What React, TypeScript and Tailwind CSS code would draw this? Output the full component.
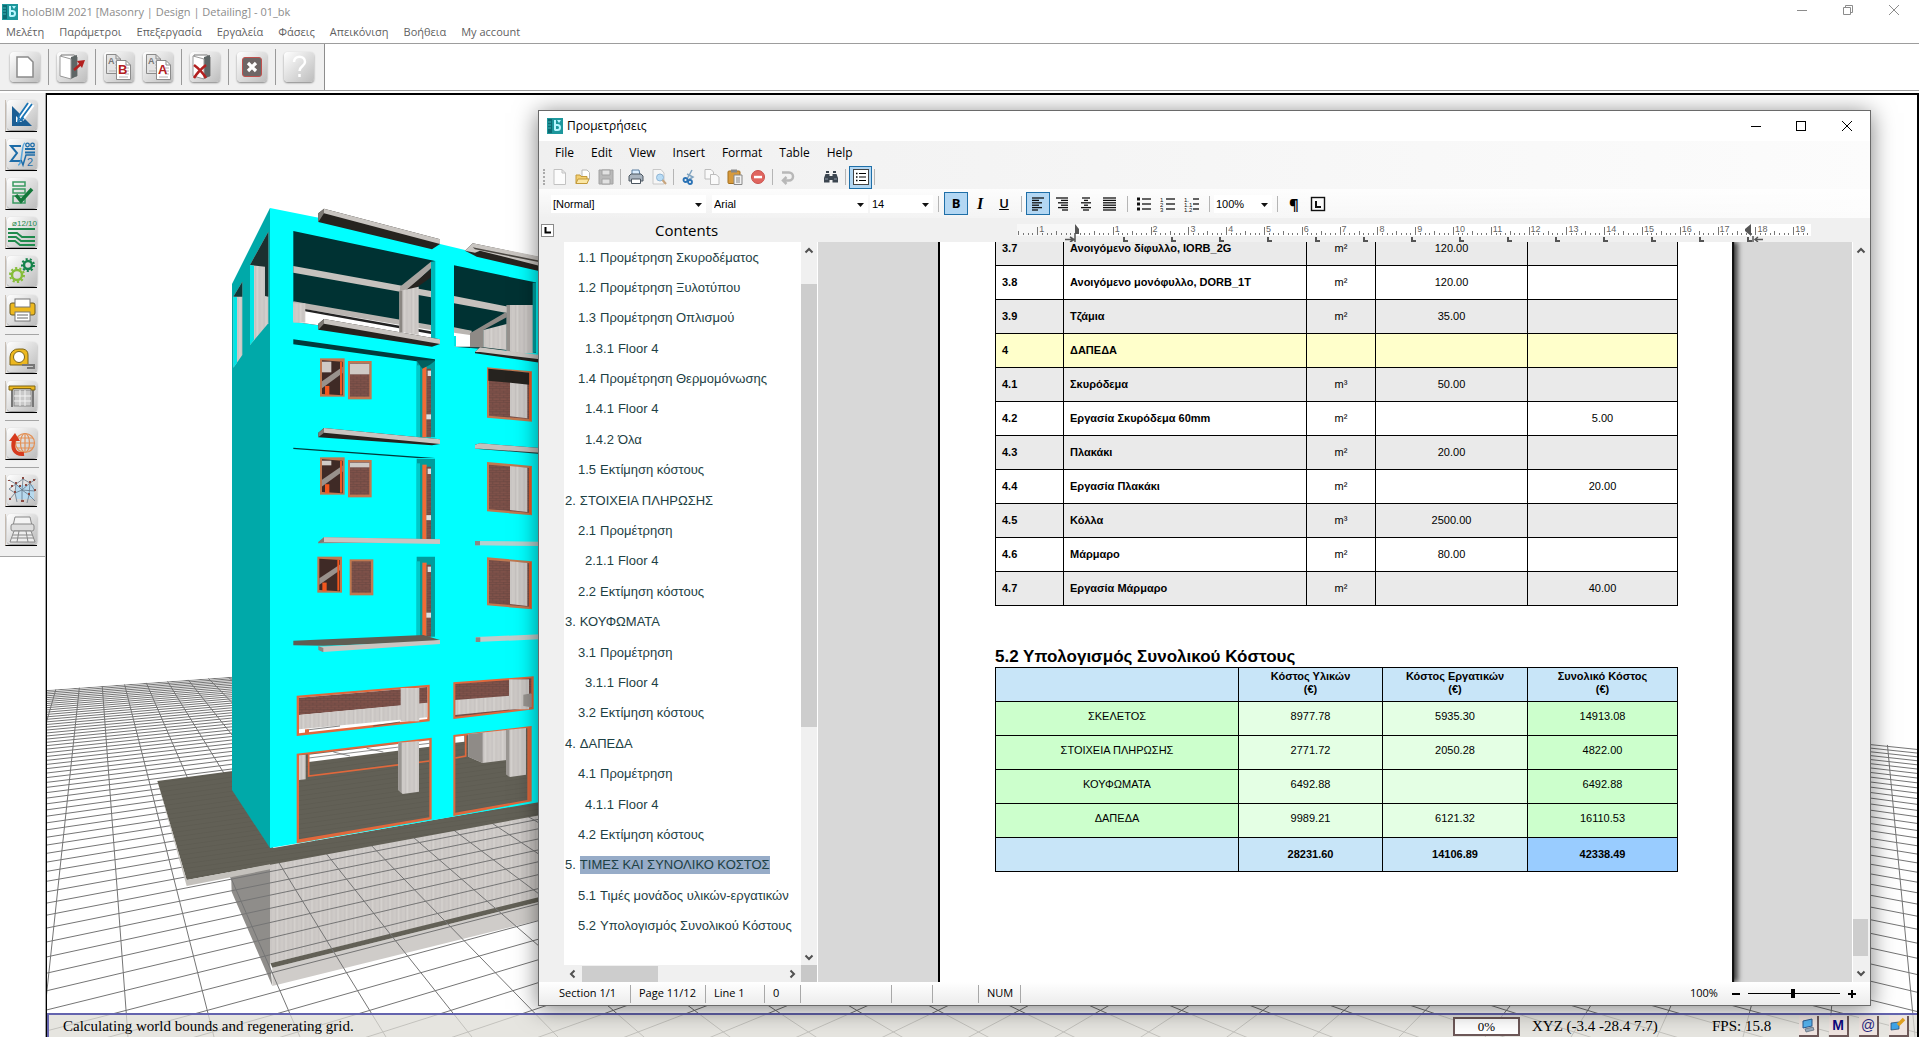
import React from "react";

const UI = "font-['Open_Sans','Noto_Sans',sans-serif]";
const DOC = "font-['Liberation_Sans',Arial,sans-serif]";

/* ---------- 3D scene ---------- */

const VP_A = { x: 1870, y: 560 };
const VP_B = { x: 93, y: 560 };
const range = (a: number, b: number) => Array.from({ length: b - a + 1 }, (_, i) => a + i);

function ray(vp: { x: number; y: number }, x0: number) {
  const f = 6;
  return { x1: vp.x, y1: vp.y, x2: vp.x + (x0 - vp.x) * f, y2: vp.y + 477 * f };
}

function Pair({ y, h, brickTop = 0, left = 0, right = 0 }: { y: number; h: number; brickTop?: number; left?: number; right?: number }) {
  return (
    <g>
      <g transform={`translate(${left} 0)`}>
        <rect x="510" y={y} width="74" height={h} fill="#c07850" />
        <polygon points={`516,${y + 6} 578,${y + 10} 578,${y + h - 4} 516,${y + h - 8}`} fill="#3f2a26" />
        <rect x="516" y={y + 10} width="28" height={brickTop} fill="#cfcac6" />
        <polygon points={`516,${y + h * 0.6} 578,${y + h * 0.22} 578,${y + h * 0.38} 516,${y + h * 0.78}`} fill="#99918c" />
        <rect x="525" y={y + h * 0.72} width="13" height={h * 0.24} fill="#f2571f" />
        <rect x="570" y={y + 10} width="6" height={h - 16} fill="#f2571f" />
      </g>
      <g transform={`translate(${right} 0)`}>
        <rect x="594" y={y + 8} width="71" height={h} fill="#c07850" />
        <rect x="600" y={y + 14} width="58" height={h - 14} fill="url(#brick)" />
        <rect x="600" y={y + 16} width="58" height={brickTop} fill="#cfcac6" />
      </g>
    </g>
  );
}

function Door({ y, h }: { y: number; h: number }) {
  return (
    <g>
      <polygon points={`800,${y} 855,${y} 855,${y + h} 800,${y + h}`} fill="#009c9c" />
      <rect x="800" y={y + 14} width="10" height={h - 14} fill="#00c8c8" />
      <rect x="817" y={y + 18} width="13" height={h - 18} fill="#f26a35" />
      <rect x="830" y={y + 24} width="13" height={h - 24} fill="url(#brick)" />
      <rect x="833" y={y + 30} width="10" height="16" fill="#ddd" />
      <rect x="829" y={y + h * 0.7} width="14" height="15" fill="#ddd" />
    </g>
  );
}

function BigWindow({ y, h, dark }: { y: number; h: number; dark?: boolean }) {
  return (
    <g>
      <polygon points={`1011,${y} 1146,${y + 12} 1146,${y + h + 8} 1011,${y + h - 4}`} fill="#c07850" />
      <polygon points={`1017,${y + 8} 1138,${y + 18} 1138,${y + h} 1017,${y + h - 10}`} fill="url(#brick)" />
      <polygon points={`1080,${y + 12} 1132,${y + 17} 1132,${y + h - 2} 1080,${y + h - 8}`} fill="url(#concrete)" />
      {dark && <polygon points={`1015,${y + 4} 1138,${y + 16} 1138,${y + 52} 1015,${y + 40}`} fill="#26231f" />}
      <rect x="1138" y={y + 14} width="5" height={h - 10} fill="#f2571f" />
    </g>
  );
}

function Ledge({ y, x2 = 870, y2, h, dark }: { y: number; x2?: number; y2: number; h: number; dark?: boolean }) {
  return (
    <g>
      <polygon points={`505,${y + 14} 522,${y} ${x2},${y2} ${x2},${y2 + 14} 846,${y2 + h - 10} 505,${y + h}`} fill={dark ? "#26231f" : "#8f8b86"} />
      <polygon points={`522,${y} ${x2},${y2} ${x2},${y2 + 14} 522,${y + 14}`} fill="#c9c5c1" />
      <polygon points={`505,${y + 14} 522,${y} 522,${y + 14} 505,${y + h}`} fill="#7e7a75" />
    </g>
  );
}

function Scene() {
  return (
    <svg className="absolute inset-0 h-full w-full" viewBox="47 95 1870 942" preserveAspectRatio="xMinYMin slice" aria-label="3D model of a building">
      <defs>
        <clipPath id="ground">
          <polygon points="46,690 820,635 1918,748 1918,1040 46,1040" />
        </clipPath>
        <pattern id="brick" width="22" height="14" patternUnits="userSpaceOnUse">
          <rect width="22" height="14" fill="#80524a" />
          <path d="M0 .5H22M0 7.5H22M5 0V7M16 7V14" stroke="#664640" strokeWidth="2" />
        </pattern>
        <pattern id="concrete" width="26" height="40" patternUnits="userSpaceOnUse">
          <rect width="26" height="40" fill="#cecac7" />
          <path d="M4 0V40M17 0V40" stroke="#c6c2bf" strokeWidth="3" />
          <path d="M10 0V40" stroke="#d5d2cf" strokeWidth="3" />
        </pattern>
        <pattern id="planks" width="60" height="14" patternUnits="userSpaceOnUse" patternTransform="rotate(-8)">
          <rect width="60" height="14" fill="#626056" />
          <path d="M0 4H60" stroke="#5e5c52" strokeWidth="3" />
        </pattern>
      </defs>

      <g transform="translate(40 600) scale(.33333)">
        <polygon points="690,790 1520,640 1520,890 690,1090" fill="url(#concrete)" />
        <polygon points="573,815 690,805 690,1090 697,1158 575,875" fill="#8f8d8a" />
        <polygon points="697,1103 1520,900 1520,955 697,1158" fill="#cfccc9" />
        <polygon points="691,1090 1520,886 1520,900 697,1103" fill="#626056" />
      </g>

      <g clipPath="url(#ground)" stroke="#757575" strokeWidth="1">
        {range(-62, 17).map((j) => (
          <line key={`a${j}`} {...ray(VP_A, 539 + 86 * j)} />
        ))}
        {range(-2, 53).map((k) => (
          <line key={`b${k}`} {...ray(VP_B, 128 + 86 * k)} />
        ))}
      </g>

      <g transform="translate(40 600) scale(.33333)">
        <polygon points="352,543 600,510 700,744 1520,600 1520,642 440,840" fill="url(#planks)" />
        <polygon points="352,543 440,840 690,793 690,808 440,858" fill="#c4c1bc" />
      </g>

      <polygon points="270,208 232,284 232,790 270,848" fill="#00a9a9" />
      <polygon points="270,208 390,232 540,268 540,802 270,848" fill="#00ffff" />

      <g transform="translate(150 190) scale(.33333)">
        <polygon points="355,125 300,225 300,465 355,400" fill="url(#concrete)" />
        <polygon points="355,125 300,225 345,230 345,318 355,320" fill="#1c3030" />
        <polygon points="300,225 312,227 312,450 300,465" fill="#00e5e5" />
        <polygon points="277,275 250,320 250,533 277,495" fill="url(#concrete)" />
        <polygon points="277,275 250,320 277,320" fill="#103838" />
        <polygon points="250,320 261,322 261,518 250,533" fill="#00e5e5" />

        <polygon points="430,123 855,213 855,455 430,395" fill="#003233" />
        <polygon points="430,228 843,303 843,322 430,248" fill="#c6c2be" />
        <polygon points="430,336 843,412 843,452 430,395" fill="#fff" />
        <polygon points="430,334 843,405 843,420 430,352" fill="#b9b5b1" />
        <polygon points="465,357 843,424 843,432 465,364" fill="#222" />
        <rect x="430" y="340" width="36" height="58" fill="url(#concrete)" />
        <polygon points="750,290 843,215 843,235 770,303 750,303" fill="#aaa5a1" />
        <polygon points="765,303 843,237 843,262 790,300" fill="#26231f" />
        <polygon points="748,303 806,290 806,435 748,425" fill="url(#concrete)" />
        <rect x="748" y="302" width="9" height="124" fill="#8b8782" />
        <polygon points="843,215 856,213 856,455 843,450" fill="#00b5b5" />

        <polygon points="912,226 1170,280 1170,490 912,470" fill="#003233" />
        <polygon points="912,318 1075,350 1075,370 912,340" fill="#c6c2be" />
        <polygon points="912,415 960,423 960,470 912,470" fill="#fff" />
        <rect x="912" y="438" width="6" height="32" fill="#00e5e5" />
        <polygon points="912,412 965,422 965,436 912,428" fill="#b9b5b1" />
        <polygon points="960,430 1070,365 1070,382 1000,420 1000,472 960,472" fill="#8f8a86" />
        <polygon points="1000,420 1070,402 1070,480 1000,472" fill="url(#concrete)" />
        <rect x="1070" y="345" width="80" height="145" fill="url(#concrete)" />
        <rect x="1070" y="345" width="10" height="138" fill="#96928e" />
        <rect x="1148" y="278" width="10" height="210" fill="#00a5a5" />
        <rect x="1158" y="270" width="12" height="220" fill="#00ffff" />

        <Ledge y={56} y2={148} h={40} dark />
        <polygon points="945,182 968,160 1170,202 1170,244 980,200" fill="#26231f" />
        <polygon points="945,182 968,160 1170,200 1170,228 990,182 975,188" fill="#c9c5c1" />
        <polygon points="968,172 1170,212 1170,217 975,178" fill="#4a4641" />
        <Ledge y={387} y2={448} h={32} dark />
        <polygon points="975,486 990,472 1170,498 1170,518 975,490" fill="#26231f" />
        <polygon points="990,472 1170,495 1170,508 990,486 975,486" fill="#c9c5c1" />
        <polygon points="430,448 855,508 855,516 800,514 430,463" fill="#003b3c" />
        <polygon points="430,773 855,804 800,804 430,777" fill="#003b3c" />

        <Pair y={505} h={115} brickTop={32} />
        <Pair y={802} h={112} brickTop={14} />
        <Pair y={1100} h={108} left={-8} right={5} />
        <Door y={512} h={230} />
        <polygon points="800,512 855,512 840,524 817,536" fill="#00605f" />
        <Door y={806} h={242} />
        <Door y={1100} h={240} />
        <BigWindow y={532} h={155} dark />
        <BigWindow y={816} h={152} />
        <BigWindow y={1102} h={148} />
        <Ledge y={714} y2={748} h={28} dark />
        <Ledge y={1042} y2={1048} h={18} />
        <polygon points="975,764 990,760 1170,774 1170,792 975,776" fill="#26403f" />
        <polygon points="975,764 990,760 1170,774 1170,788 990,776 975,776" fill="#c4c0bc" />
        <polygon points="975,1053 1170,1055 1170,1068 975,1066" fill="#b4cfcd" />
        <rect x="975" y="1053" width="15" height="13" fill="#8b8782" />
      </g>

      <g transform="translate(40 600) scale(.33333)">
        <polygon points="760,122 1150,105 1200,120 1160,127 850,137 760,136" fill="#5f5d53" />
        <polygon points="835,140 1200,120 1200,132 850,156" fill="#c9c5c1" />
        <polygon points="835,138 850,144 850,157 835,150" fill="#8b8782" />
        <polygon points="1307,111 1500,103 1500,118 1307,126" fill="#c0ccca" />
        <rect x="1307" y="112" width="14" height="14" fill="#8b8782" />

        <polygon points="770,287 1169,254 1169,364 770,408" fill="#e0683c" />
        <polygon points="777,293 1162,261 1162,357 777,400" fill="#fff" />
        <polygon points="777,293 1162,261 1162,310 777,345" fill="url(#brick)" />
        <polygon points="777,345 1162,308 1162,352 777,388" fill="url(#concrete)" />
        <path d="M800 390L900 378M1000 378L1080 366" stroke="#444" strokeWidth="2" />
        <rect x="1082" y="264" width="56" height="100" fill="url(#concrete)" />
        <rect x="795" y="388" width="12" height="12" fill="#e0683c" />

        <polygon points="1240,247 1481,229 1481,328 1240,357" fill="#e0683c" />
        <polygon points="1246,252 1474,235 1474,323 1246,350" fill="url(#brick)" />
        <polygon points="1246,300 1474,282 1474,322 1246,345" fill="url(#concrete)" />
        <rect x="1407" y="238" width="60" height="90" fill="url(#concrete)" />
        <polygon points="1450,284 1474,280 1474,322 1450,318" fill="#999591" />

        <polygon points="770,461 1175,413 1175,658 770,730" fill="#e0683c" />
        <polygon points="777,466 1168,421 1168,652 777,718" fill="url(#planks)" />
        <polygon points="806,464 1168,421 1168,440 806,486" fill="#fff" />
        <path d="M880 456L930 468M980 445L1030 456M806 474L1168 430" stroke="#555" strokeWidth="2" />
        <path d="M806 462V528L1168 483" fill="none" stroke="#e0683c" strokeWidth="5" />
        <polygon points="777,466 797,464 797,538 777,540" fill="url(#concrete)" />
        <polygon points="1075,428 1137,423 1137,575 1088,582 1075,570" fill="url(#concrete)" />
        <polygon points="1075,428 1085,427 1085,580 1075,570" fill="#9a9692" />

        <polygon points="1240,405 1475,378 1475,604 1240,648" fill="#e0683c" />
        <polygon points="1246,410 1462,385 1462,600 1246,638" fill="url(#planks)" />
        <polygon points="1246,410 1273,407 1273,425 1246,428" fill="#fff" />
        <path d="M1246 474L1277 468V404" fill="none" stroke="#e0683c" strokeWidth="5" />
        <polygon points="1285,402 1400,390 1400,480 1328,489 1285,470" fill="url(#concrete)" />
        <polygon points="1285,402 1328,398 1328,489 1285,470" fill="#8f8b87" />
        <polygon points="1398,390 1458,384 1458,524 1410,531 1398,522" fill="url(#concrete)" />
        <polygon points="1398,390 1408,389 1408,531 1398,522" fill="#9a9692" />
      </g>
    </svg>
  );
}

/* ---------- icons ---------- */

function Logo() {
  return (
    <svg width="16" height="16" viewBox="0 0 16 16" className="shrink-0">
      <rect width="16" height="16" fill="#1d979c" />
      <rect x="1" y="1" width="4" height="14" fill="#0d6b73" />
      <path d="M1 4H4M1 7H4M1 10H4" stroke="#4cc" strokeWidth=".8" />
      <path d="M8 2V12.500M8 12H10.500A2.500 2.500 0 0 0 10.500 7H8" stroke="#b8f6ff" strokeWidth="2" fill="none" />
      <path d="M10 2H14L12 5Z" fill="#b8f6ff" />
    </svg>
  );
}

const Sheet = ({ x, y, l, red }: { x: number; y: number; l: string; red?: boolean }) => (
  <g transform={`translate(${x} ${y})`}>
    <path d="M.5.5H10L14.500 5V19.500H.500Z" fill={red ? "#fff" : "#e4e4e4"} stroke="#8b8b8b" />
    <path d="M10 .5V5H14.500" fill="none" stroke="#8b8b8b" />
    <path d="M3 17H12M9 8H13M9 11H13M9 14H13" stroke="#b5b5b5" />
    <text x="2" y={red ? 14 : 10} fontSize={red ? 13 : 9} fontWeight="700" fill={red ? "#b3201f" : "#777"} fontFamily="Liberation Sans">{l}</text>
  </g>
);

const Folder = () => (
  <g>
    <path d="M4 3H17L20 5V24H4Z" fill="#fff" stroke="#777" />
    <path d="M14 5L20 3V24L14 27Z" fill="#5e6666" />
    <path d="M3 4L14 7V27L3 24Z" fill="#fff" stroke="#999" />
  </g>
);

const mainIcons: { label: string; icon: React.ReactNode; sep?: boolean }[] = [
  { label: "New", icon: <path d="M7 5H18L23 10V25H7Z" fill="#fff" stroke="#8b8b8b" strokeWidth="1.500" />, sep: true },
  {
    label: "Open",
    icon: (<g><Folder /><path d="M17 18L25 11" stroke="#b3201f" strokeWidth="2.500" /><path d="M20 9L28 8L25 16Z" fill="#b3201f" /></g>),
    sep: true,
  },
  { label: "Save as B", icon: (<g><Sheet x={2} y={2} l="A" /><Sheet x={12} y={8} l="B" red /></g>) },
  { label: "Save as A", icon: (<g><Sheet x={3} y={2} l="A" /><Sheet x={13} y={8} l="A" red /></g>), sep: true },
  { label: "Delete", icon: (<g><Folder /><path d="M4 13C8 16 13 21 16 26M16 13C11 17 7 21 4 26" stroke="#b3201f" strokeWidth="2.500" fill="none" /></g>), sep: true },
  {
    label: "Close",
    icon: (<g><rect x="5.500" y="5.500" width="19" height="19" rx="2.500" fill="#6e6666" stroke="#c0504d" /><path d="M11 11L19 19M19 11L11 19" stroke="#fff" strokeWidth="3.200" /></g>),
    sep: true,
  },
  { label: "Help", icon: (<path d="M10 10C10 3 21 3 21 10C21 14 15.500 14 15.500 19M15.500 22V25" stroke="#fff" strokeWidth="2.500" fill="none" />) },
];

const gear = (cx: number, cy: number, r: number, c: string, n: number) => (
  <g>
    <circle cx={cx} cy={cy} r={r - 1} fill="none" stroke={c} strokeWidth="2.500" />
    <circle cx={cx} cy={cy} r={r + 1} fill="none" stroke={c} strokeWidth="2" strokeDasharray={`${(Math.PI * (r + 1)) / n} ${(Math.PI * (r + 1)) / n}`} />
  </g>
);

const sideIcons: { label: string; icon: React.ReactNode; sep?: boolean }[] = [
  {
    label: "Design",
    icon: (<g><path d="M5 6V26H25L5 6Z" fill="#1b5e94" /><path d="M9 16V22H15Z" fill="#fff" /><path d="M25 4L14 19" stroke="#fff" strokeWidth="6" /><path d="M25 4L14 19M21 3L12 16M12 15L11 22L17 18" stroke="#1b75b5" strokeWidth="1.800" fill="none" /></g>),
  },
  {
    label: "Calculate",
    icon: (<g fill="none" stroke="#1d6ca8" strokeWidth="2"><path d="M14 7H4L10 14L4 22H14" /><path d="M18 4C14 4 16 26 11 26" stroke="#5aa7dc" strokeWidth="1.500" /><path d="M18 10H28M18 13.500H28" /><circle cx="20.500" cy="6" r="1.800" strokeWidth="1.300" /><circle cx="25.500" cy="6" r="1.800" strokeWidth="1.300" /><path d="M14 21L16 26L19 16H28" strokeWidth="1.500" /><text x="20" y="27" fontSize="11" fill="#1d6ca8" stroke="none" fontFamily="Liberation Sans">2</text></g>),
  },
  {
    label: "Check",
    icon: (<g><g fill="none" stroke="#3a9a62" strokeWidth="1.500"><rect x="6" y="4" width="12" height="4" /><rect x="6" y="11" width="12" height="4" /><rect x="6" y="18" width="12" height="7" /></g><path d="M9 17L14 23L25 11" stroke="#14773a" strokeWidth="3.500" fill="none" /></g>),
  },
  {
    label: "Reinforcement",
    icon: (<g stroke="#1f8a4c" fill="none"><text x="5" y="9" fontSize="8" fill="#1f8a4c" stroke="none" fontFamily="Liberation Sans">⌀12/10</text><path d="M1 12H28M1 16H10L15 20H28M1 20H9L14 24H28M1 24H8L13 28H28" strokeWidth="1.800" /></g>),
  },
  { label: "Settings", icon: (<g>{gear(10, 19, 6, "#86bd3a", 10)}{gear(21, 9, 5, "#15824a", 9)}</g>) },
  {
    label: "Print",
    icon: (<g><rect x="3" y="8" width="25" height="12" rx="2" fill="#edb81f" stroke="#6b5a20" /><rect x="8" y="4" width="15" height="8" fill="#fff" stroke="#777" /><rect x="8" y="17" width="15" height="9" fill="#fff" stroke="#777" /><path d="M10 20H21M10 23H21" stroke="#666" /></g>),
    sep: true,
  },
  {
    label: "Measure",
    icon: (<g><path d="M3 23V15A8 8 0 0 1 12 7H16A6 6 0 0 1 21 13V23Z" fill="#edb81f" stroke="#7d6518" /><circle cx="12" cy="15" r="5.500" fill="#fff" stroke="#7d6518" /><path d="M15 23H27V26H20" fill="none" stroke="#777" strokeWidth="2" /></g>),
  },
  {
    label: "Plot",
    icon: (<g><path d="M5 8V26M26 8V26" stroke="#777" strokeWidth="2" /><rect x="7" y="9" width="17" height="16" fill="#c9c9c9" stroke="#888" /><path d="M13 9V25M18 9V25M7 15H24M7 20H24" stroke="#f4f4f4" /><path d="M2 5H28V9H24V7.500H6V9H2Z" fill="#edb81f" stroke="#7d6518" /></g>),
    sep: true,
  },
  {
    label: "Publish",
    icon: (<g fill="none" stroke="#e39055" strokeWidth="1.200"><circle cx="18" cy="15" r="9.500" /><ellipse cx="18" cy="15" rx="4.500" ry="9.500" /><path d="M18 5.500V24.500M8.500 15H27.500M10 10H26M10 20H26" /><path d="M17 26C7 27 5 20 7 12" stroke="#d63a1e" strokeWidth="4" /><path d="M2 13L8 5L13 13Z" fill="#d63a1e" stroke="none" /></g>),
    sep: true,
  },
  {
    label: "Mesh",
    icon: (<g><rect x="9" y="10" width="18" height="14" fill="#b6d9ee" /><path d="M2 5L9 9L16 4L23 8L29 4M2 14L9 9L15 15L23 8L28 16M3 24L8 18L15 15L22 20L28 26M2 14L8 18L9 9M15 15V27M23 8L22 20M16 4L15 15L28 16M8 18L10 27M22 20L20 28" stroke="#667788" strokeWidth=".8" fill="none" /><path d="M8 8H10M15 3H17M22 7H24M7 17H9M21 19H23M27 15H29M2 5V6M14 26H17M2 24H4M4 11H6M12 11H14M26 5H28M18 10H20" stroke="#8a4a42" strokeWidth="2.200" /></g>),
  },
  {
    label: "Scan",
    icon: (<g fill="#ddd" stroke="#888"><path d="M8 3H23L25 12H6Z" fill="#f4f4f4" /><rect x="4" y="10" width="23" height="7" rx="2" /><path d="M7 17H24L28 28H3Z" fill="#eee" /><path d="M6 21H25M5 24H27M12 17L10 28M19 17L21 28" fill="none" /></g>),
  },
];

const tile = "flex h-[30px] w-[30px] shrink-0 items-center justify-center rounded-sm bg-linear-to-br from-white to-[#bdbdbd] shadow-[0_1px_2px_rgba(0,0,0,0.45)]";

const Icon16 = ({ children }: { children: React.ReactNode }) => (
  <svg width="16" height="16" viewBox="0 0 16 16" fill="none">{children}</svg>
);

const fileTools: { label: string; icon?: React.ReactNode; sep?: boolean }[] = [
  { label: "New document", icon: <path d="M2 .5H10L13.500 4V15.500H2ZM10 .5V4H13.500" fill="#fcfcfc" stroke="#c2c2c2" /> },
  { label: "Open document", icon: (<g><path d="M7 1H12L14.500 3.500V10H7Z" fill="#fff" stroke="#b8b8b8" /><path d="M1 6H5L6 7.500H12V14.500H1Z" fill="#f3cf72" stroke="#c39a3a" /><path d="M3 10H14L12 14.500H1Z" fill="#fbe7a5" stroke="#c39a3a" /></g>) },
  { label: "Save document", icon: (<g><path d="M1 1H15V15H1Z" fill="#b9b9b9" stroke="#a2a2a2" /><path d="M4 1H12V6H4ZM4 10H12V15H4Z" fill="#e2e2e2" stroke="#a2a2a2" /></g>), sep: true },
  { label: "Print document", icon: (<g><path d="M4 1H11L12 6H4Z" fill="#dbeeff" stroke="#5d7fa0" /><path d="M1 7L3 5H13L15 7V12H1Z" fill="#a9b4bf" stroke="#4c5660" /><path d="M3.500 10H12.500V14.500H3.500Z" fill="#fff" stroke="#4c5660" /></g>) },
  { label: "Print preview", icon: (<g><path d="M2 .5H10L13 4V15H2Z" fill="#f6f6f6" stroke="#c8c8c8" /><circle cx="9" cy="8.500" r="3.500" fill="#b9dcf5" stroke="#8fb5d5" /><path d="M11.500 11L15 15" stroke="#c7a57e" strokeWidth="2" /></g>), sep: true },
  { label: "Cut", icon: (<g><path d="M11 1L6 10M6 5L12 8L7 11" stroke="#7fa3c0" strokeWidth="1.500" /><circle cx="4.500" cy="11" r="2" stroke="#2a72b5" strokeWidth="1.800" /><circle cx="9" cy="13" r="2" stroke="#2a72b5" strokeWidth="1.800" /></g>) },
  { label: "Copy", icon: (<g fill="#fafafa" stroke="#bdbdbd"><path d="M1 .5H7L9.500 3V10H1Z" /><path d="M6.500 5.500H12L15 8V15.500H6.500Z" /></g>) },
  { label: "Paste", icon: (<g><rect x="1" y="2" width="12" height="12.500" rx="1" fill="#d79a3c" stroke="#a36f1d" /><rect x="4" y=".5" width="6" height="3" fill="#888" /><path d="M7 6H15V15.500H7Z" fill="#f1f1f1" stroke="#888" /><path d="M9 9H13M9 11H13M9 13H13" stroke="#888" /></g>) },
  { label: "Delete", icon: (<g><circle cx="8" cy="8" r="6.500" fill="#e0655f" stroke="#c9514c" /><rect x="4" y="6.800" width="8" height="2.500" fill="#fff" /></g>), sep: true },
  { label: "Undo", icon: <path d="M2 3.500H9A4 4 0 0 1 9 11.500H4M6.500 8L3 11.500L6.500 15" stroke="#b8b8b8" strokeWidth="2.500" /> },
];

function Sep({ w = "w-[7px]" }: { w?: string }) {
  return (
    <span className={`flex h-4 justify-center ${w}`} aria-hidden="true">
      <span className="w-px bg-[#b5b5b5]" />
    </span>
  );
}

function Lines({ rows, bullets }: { rows: [number, number][]; bullets?: "dot" | "num" | "multi" }) {
  return (
    <Icon16>
      {rows.map(([a, b], i) => (
        <path key={i} d={`M${a} ${(bullets ? 3 : 2) + i * (bullets ? 5 : 2.4)}H${b}`} stroke="#111" strokeWidth="1.300" />
      ))}
      {bullets === "dot" && <path d="M1 3H4M1 8H4M1 13H4" stroke="#111" strokeWidth="3" />}
      {bullets === "num" && [1, 2, 3].map((n) => <text key={n} x="0" y={n * 5 + 0.5} fontSize="6" fill="#111" fontFamily="Liberation Sans">{n}</text>)}
      {bullets === "multi" && ["1.", "1.1", "1.2"].map((n, i) => <text key={n} x="0" y={i * 5 + 5.5} fontSize="6" fill="#111" fontFamily="Liberation Sans">{n}</text>)}
    </Icon16>
  );
}

function Tool({ label, on, children, w = "w-6" }: { label: string; on?: boolean; children?: React.ReactNode; w?: string }) {
  return (
    <button type="button" aria-label={label} aria-pressed={on} className={`flex h-[23px] ${w} shrink-0 items-center justify-center ${on ? "border border-[#1f6fa8] bg-[#b3d7f3]" : ""}`}>
      {children}
    </button>
  );
}

function Combo({ label, value, w }: { label: string; value: string; w: string }) {
  return (
    <label className={`relative flex h-[18px] ${w} bg-white`}>
      <span className="sr-only">{label}</span>
      <select className={`h-full w-full appearance-none bg-transparent pl-0.5 text-[11px] leading-[18px] outline-none ${DOC}`} defaultValue={value}>
        <option>{value}</option>
      </select>
      <svg width="7" height="4" viewBox="0 0 7 4" className="pointer-events-none absolute right-1 top-2">
        <path d="M0 0H7L3.500 4Z" fill="#111" />
      </svg>
    </label>
  );
}

function Chevron({ dir }: { dir: "up" | "down" | "left" | "right" }) {
  const d = { up: "M1.500 6.500L5 3L8.500 6.500", down: "M1.500 3.500L5 7L8.500 3.500", left: "M6.500 1.500L3 5L6.500 8.500", right: "M3.500 1.500L7 5L3.500 8.500" }[dir];
  return (
    <svg width="10" height="10" viewBox="0 0 10 10"><path d={d} stroke="#505050" strokeWidth="2" fill="none" /></svg>
  );
}

/* ---------- document data ---------- */

const outline: [number, string, string][] = [
  [2, "1.1", "Προμέτρηση Σκυροδέματος"],
  [2, "1.2", "Προμέτρηση Ξυλοτύπου"],
  [2, "1.3", "Προμέτρηση Οπλισμού"],
  [3, "1.3.1", "Floor 4"],
  [2, "1.4", "Προμέτρηση Θερμομόνωσης"],
  [3, "1.4.1", "Floor 4"],
  [3, "1.4.2", "Όλα"],
  [2, "1.5", "Εκτίμηση κόστους"],
  [1, "2.", "ΣΤΟΙΧΕΙΑ ΠΛΗΡΩΣΗΣ"],
  [2, "2.1", "Προμέτρηση"],
  [3, "2.1.1", "Floor 4"],
  [2, "2.2", "Εκτίμηση κόστους"],
  [1, "3.", "ΚΟΥΦΩΜΑΤΑ"],
  [2, "3.1", "Προμέτρηση"],
  [3, "3.1.1", "Floor 4"],
  [2, "3.2", "Εκτίμηση κόστους"],
  [1, "4.", "ΔΑΠΕΔΑ"],
  [2, "4.1", "Προμέτρηση"],
  [3, "4.1.1", "Floor 4"],
  [2, "4.2", "Εκτίμηση κόστους"],
  [1, "5.", "ΤΙΜΕΣ ΚΑΙ ΣΥΝΟΛΙΚΟ ΚΟΣΤΟΣ"],
  [2, "5.1", "Τιμές μονάδος υλικών-εργατικών"],
  [2, "5.2", "Υπολογισμός Συνολικού Κόστους"],
];

const prices: string[][] = [
  ["3.7", "Ανοιγόμενο δίφυλλο, IORB_2G", "m²", "120.00", ""],
  ["3.8", "Ανοιγόμενο μονόφυλλο, DORB_1T", "m²", "120.00", ""],
  ["3.9", "Τζάμια", "m²", "35.00", ""],
  ["4", "ΔΑΠΕΔΑ", "", "", ""],
  ["4.1", "Σκυρόδεμα", "m³", "50.00", ""],
  ["4.2", "Εργασία Σκυρόδεμα 60mm", "m²", "", "5.00"],
  ["4.3", "Πλακάκι", "m²", "20.00", ""],
  ["4.4", "Εργασία Πλακάκι", "m²", "", "20.00"],
  ["4.5", "Κόλλα", "m³", "2500.00", ""],
  ["4.6", "Μάρμαρο", "m²", "80.00", ""],
  ["4.7", "Εργασία Μάρμαρο", "m²", "", "40.00"],
];

const totals: string[][] = [
  ["ΣΚΕΛΕΤΟΣ", "8977.78", "5935.30", "14913.08"],
  ["ΣΤΟΙΧΕΙΑ ΠΛΗΡΩΣΗΣ", "2771.72", "2050.28", "4822.00"],
  ["ΚΟΥΦΩΜΑΤΑ", "6492.88", "", "6492.88"],
  ["ΔΑΠΕΔΑ", "9989.21", "6121.32", "16110.53"],
];

function Ruler() {
  const zero = 58;
  return (
    <svg width="794" height="19" viewBox="0 0 794 19" className="block" aria-hidden="true">
      <rect width="794" height="12" fill="#fff" />
      <rect width="58" height="12" fill="#f7f7f7" />
      {range(-12, 155).map((i) => {
        const x = Math.round(zero + (i * 37.8) / 8) + 0.5;
        if (x < 0 || x > 792) return null;
        const h = i === 0 ? 0 : i % 8 === 0 ? 8 : i % 4 === 0 ? 4 : 2;
        return <path key={i} d={`M${x} ${11 - h}V11`} stroke="#777" />;
      })}
      {range(-1, 19).filter((n) => n !== 0).map((n) => (
        <text key={n} x={zero + n * 37.8 + 2} y="7.500" fontSize="9" fill="#666" fontFamily="Liberation Sans">{Math.abs(n)}</text>
      ))}
      <path d="M58 0L62 5V10H58Z" fill="#555" />
      <path d="M734 0L728 5V7L734 12Z" fill="#555" />
      <path d="M58 9V19M48 15.500H56M53 13L57 15.500L53 18" stroke="#555" strokeWidth="1.500" fill="none" />
      <path d="M736 12V19M738 15.500H746M741 13L738 15.500L741 18" stroke="#555" strokeWidth="1.500" fill="none" />
      {range(0, 13).map((n) => (
        <path key={n} d={`M${107 + n * 48} 13V17H${111 + n * 48}`} stroke="#555" strokeWidth="2" fill="none" />
      ))}
    </svg>
  );
}

const cell = "h-[34px] border border-black p-0 pl-1.5 pr-1";
const numCell = "h-[34px] border border-black p-0 px-1 text-center";

function DocumentPage() {
  return (
    <article className={`mx-auto h-full w-[794px] shrink-0 overflow-hidden border-l-2 border-black bg-white pl-[55px] pr-[54px] text-[11px] leading-[13px] text-black shadow-[2px_0_1px_#111,6px_0_5px_#444] ${DOC}`}>
      <table className="-mt-[11px] w-full table-fixed border-collapse">
        <colgroup>
          <col className="w-[68px]" /><col className="w-[243px]" /><col className="w-[69px]" /><col className="w-[152px]" /><col />
        </colgroup>
        <tbody>
          {prices.map((r, i) => (
            <tr key={r[0]} className={r[0] === "4" ? "bg-[#ffffcb]" : i % 2 === 0 ? "bg-[#eaeaea]" : "bg-white"}>
              <th scope="row" className={`${cell} text-left font-bold`}>{r[0]}</th>
              <td className={`${cell} font-bold`}>{r[1]}</td>
              <td className={numCell}>{r[2]}</td>
              <td className={numCell}>{r[3]}</td>
              <td className={numCell}>{r[4]}</td>
            </tr>
          ))}
        </tbody>
      </table>
      <h2 className="mt-[41px] text-[17px] font-bold leading-5">5.2 Υπολογισμός Συνολικού Κόστους</h2>
      <table className="w-full table-fixed border-collapse">
        <colgroup>
          <col className="w-[243px]" /><col className="w-[144px]" /><col className="w-[145px]" /><col />
        </colgroup>
        <thead>
          <tr className="bg-[#c8e5f8]">
            <td className={cell} />
            {["Κόστος Υλικών", "Κόστος Εργατικών", "Συνολικό Κόστος"].map((h) => (
              <th key={h} scope="col" className={`${numCell} pb-1 font-bold`}>{h}<br />(€)</th>
            ))}
          </tr>
        </thead>
        <tbody>
          {totals.map((r) => (
            <tr key={r[0]}>
              <th scope="row" className={`${numCell} bg-[#ccffcc] pb-1 font-normal`}>{r[0]}</th>
              <td className={`${numCell} bg-[#e4ffe4] pb-1`}>{r[1]}</td>
              <td className={`${numCell} bg-[#e4ffe4] pb-1`}>{r[2]}</td>
              <td className={`${numCell} bg-[#ccffcc] pb-1`}>{r[3]}</td>
            </tr>
          ))}
          <tr className="bg-[#c8e5f8] font-bold">
            <td className={cell} />
            <td className={numCell}>28231.60</td>
            <td className={numCell}>14106.89</td>
            <td className={`${numCell} bg-[#99ccff]`}>42338.49</td>
          </tr>
        </tbody>
      </table>
    </article>
  );
}

function Contents() {
  return (
    <aside className="flex w-[278px] shrink-0 flex-col bg-[#f0f0f0] pl-[25px]">
      <div className="flex min-h-0 flex-1">
        <nav aria-label="Contents" className={`flex min-w-0 flex-1 flex-col overflow-hidden bg-white pb-6 ${DOC}`}>
          {outline.map(([lvl, n, t]) => (
            <a key={n} href="#doc" className={`flex min-h-0 flex-1 items-center gap-1 whitespace-nowrap text-[13px] text-[#1d4044] ${lvl === 1 ? "pl-px" : lvl === 2 ? "pl-[14px]" : "pl-[21px]"}`}>
              <span>{n}</span>
              <span className={n === "5." ? "bg-[#97acc8]" : ""}>{t}</span>
            </a>
          ))}
        </nav>
        <div className="flex w-4 shrink-0 flex-col items-center">
          <span className="flex h-[42px] pt-1"><Chevron dir="up" /></span>
          <span className="w-full flex-[442] bg-[#cdcdcd]" />
          <span className="w-full flex-[222]" />
          <span className="flex h-4 items-center"><Chevron dir="down" /></span>
        </div>
      </div>
      <div className="flex h-[17px]">
        <div className="flex flex-1 items-center px-1">
          <Chevron dir="left" />
          <span className="ml-1 h-4 w-[76px] bg-[#cdcdcd]" />
          <span className="flex-1" />
          <Chevron dir="right" />
        </div>
        <span className="w-4 bg-[#c8c8c8]" />
      </div>
    </aside>
  );
}

function StatusCell({ w, children }: { w: string; children?: React.ReactNode }) {
  return <span className={`flex h-[18px] items-center border-r border-[#a8a8a8] pl-2 ${w}`}>{children}</span>;
}

function Dialog() {
  return (
    <section role="dialog" aria-label="Προμετρήσεις" className="absolute bottom-[31px] left-[491px] right-[46px] top-[15px] flex flex-col border border-[#6a6a6a] bg-[#f0f0f0] text-xs text-black shadow-[0_3px_22px_rgba(0,0,0,0.5)]">
      <header className="flex h-[30px] shrink-0 items-center bg-white pl-2">
        <Logo />
        <h1 className="ml-1 flex-1 text-xs">Προμετρήσεις</h1>
        <button type="button" aria-label="Minimize" className="flex h-full w-[45px] items-center justify-center"><span className="h-px w-[10px] bg-black" /></button>
        <button type="button" aria-label="Maximize" className="flex h-full w-[45px] items-center justify-center"><span className="h-[10px] w-[10px] border border-black" /></button>
        <button type="button" aria-label="Close" className="flex h-full w-[47px] items-center justify-center">
          <svg width="10" height="10" viewBox="0 0 10 10"><path d="M0 0L10 10M10 0L0 10" stroke="#000" /></svg>
        </button>
      </header>
      <div className="shrink-0 bg-linear-to-r from-[#f0f0f0] to-[#fcfcfc]">
        <nav className="flex h-6 items-center gap-[17px] pl-4" aria-label="Document menu">
          {["File", "Edit", "View", "Insert", "Format", "Table", "Help"].map((m) => (
            <button key={m} type="button">{m}</button>
          ))}
        </nav>
        <div className="flex h-6 items-center pl-1">
          <span className="mr-[3px] h-4 w-0 border-l-2 border-dotted border-[#aaa]" />
          {fileTools.map((t) => (
            <React.Fragment key={t.label}>
              <Tool label={t.label} w="w-[23px]"><Icon16>{t.icon}</Icon16></Tool>
              {t.sep && <Sep />}
            </React.Fragment>
          ))}
          <span className="w-5" />
          <Tool label="Find" w="w-[23px]">
            <Icon16><path d="M2.500 5H6.500V13.500H1V9ZM9.500 5H13.500L15 9V13.500H9.500ZM6 7H10V11H6ZM3 2H6V4H3ZM10 2H13V4H10Z" fill="#3c4650" /><path d="M2 10H5M11 10H14" stroke="#8a97a5" /></Icon16>
          </Tool>
          <Sep />
          <Tool label="Show contents" on w="w-[23px]">
            <Icon16><rect x=".5" y=".5" width="15" height="15" fill="#fff" stroke="#444" /><path d="M3 4.500H4.500M3 8H4.500M3 11.500H4.500" stroke="#000" strokeWidth="1.500" /><path d="M6 4.500H13M6 8H13M6 11.500H13" stroke="#000" strokeWidth="1.200" /></Icon16>
          </Tool>
          <Sep w="w-1" />
        </div>
        <div className="flex h-[29px] items-center bg-linear-to-b from-white/80 to-transparent pl-3">
          <Combo label="Style" value="[Normal]" w="w-[155px]" />
          <span className="w-1.5" />
          <Combo label="Font" value="Arial" w="w-[156px]" />
          <span className="w-0.5" />
          <Combo label="Size" value="14" w="w-[63px]" />
          <Sep w="w-[11px]" />
          <Tool label="Bold" on><b className="text-[13px]">B</b></Tool>
          <Tool label="Italic"><i className="font-['Liberation_Serif',serif] text-base font-bold">I</i></Tool>
          <Tool label="Underline"><span className="text-[13px] font-semibold underline">U</span></Tool>
          <Sep w="w-[10px]" />
          <Tool label="Align left" on><Lines rows={[[2, 14], [2, 9], [2, 12], [2, 9], [2, 12], [2, 8]]} /></Tool>
          <Tool label="Align right"><Lines rows={[[2, 14], [7, 14], [4, 14], [7, 14], [4, 14], [8, 14]]} /></Tool>
          <Tool label="Align center"><Lines rows={[[4, 12], [6, 10], [3, 13], [6, 10], [3, 13], [5, 11]]} /></Tool>
          <Tool label="Justify"><Lines rows={[[1, 14], [1, 14], [1, 14], [1, 14], [1, 14], [1, 14]]} /></Tool>
          <Sep w="w-[10px]" />
          <Tool label="Bulleted list"><Lines rows={[[6, 15], [6, 15], [6, 15]]} bullets="dot" /></Tool>
          <Tool label="Numbered list"><Lines rows={[[6, 15], [6, 15], [6, 15]]} bullets="num" /></Tool>
          <Tool label="Multilevel list"><Lines rows={[[9, 15], [9, 15], [9, 15]]} bullets="multi" /></Tool>
          <Sep w="w-[10px]" />
          <Combo label="Zoom" value="100%" w="w-[58px]" />
          <Sep w="w-[10px]" />
          <Tool label="Paragraph marks"><span className="text-[15px] font-bold">¶</span></Tool>
          <Tool label="Tab frame"><Icon16><rect x="1.500" y="1.500" width="13" height="13" stroke="#111" strokeWidth="1.400" /><path d="M6 5V11H11" stroke="#111" strokeWidth="2" /></Icon16></Tool>
        </div>
      </div>
      <div className="flex h-6 shrink-0 items-start">
        <div className="flex w-[278px] items-center pt-1">
          <span className="ml-0.5 flex h-[13px] w-[13px] items-center justify-center border border-[#8a8a8a] bg-white">
            <svg width="7" height="7" viewBox="0 0 7 7"><path d="M1.500 0V5.500H7" stroke="#000" strokeWidth="2" fill="none" /></svg>
          </span>
          <h2 className="ml-[101px] text-[15px] leading-4">Contents</h2>
        </div>
        <div className="ml-[200px] pt-1.5"><Ruler /></div>
      </div>
      <div className="flex min-h-0 flex-1">
        <Contents />
        <main id="doc" className="flex min-w-0 flex-1 overflow-hidden border-l border-white bg-[#d8d8d8]">
          <DocumentPage />
        </main>
        <div className="flex w-[18px] shrink-0 flex-col items-center border-l border-white bg-[#f0f0f0] pr-0.5">
          <span className="pt-1"><Chevron dir="up" /></span>
          <span className="flex-1" />
          <span className="h-[37px] w-full bg-[#cdcdcd]" />
          <span className="flex h-[26px] pt-3"><Chevron dir="down" /></span>
        </div>
      </div>
      <footer className="flex h-[23px] shrink-0 items-center bg-linear-to-b from-white to-[#ececec] text-[11px]">
        <StatusCell w="w-[92px] pl-5">Section 1/1</StatusCell>
        <StatusCell w="w-[75px]">Page 11/12</StatusCell>
        <StatusCell w="w-[59px]">Line 1</StatusCell>
        <StatusCell w="w-9">0</StatusCell>
        <StatusCell w="w-[91px]" />
        <StatusCell w="w-[41px]" />
        <StatusCell w="w-[46px]" />
        <StatusCell w="w-[42px]">NUM</StatusCell>
        <span className="flex-1" />
        <span className="w-[38px]">100%</span>
        <button type="button" aria-label="Zoom out" className="flex h-4 w-4 items-center justify-center"><span className="h-0.5 w-2 bg-black" /></button>
        <input
          type="range"
          aria-label="Zoom level"
          defaultValue={49}
          className="mx-1 h-[10px] w-[92px] appearance-none bg-[linear-gradient(#000,#000)] bg-[length:100%_1px] bg-center bg-no-repeat [&::-webkit-slider-thumb]:h-[9px] [&::-webkit-slider-thumb]:w-1 [&::-webkit-slider-thumb]:appearance-none [&::-webkit-slider-thumb]:bg-black"
        />
        <button type="button" aria-label="Zoom in" className="mr-[10px] flex h-4 w-4 items-center justify-center">
          <svg width="8" height="8" viewBox="0 0 8 8"><path d="M4 0V8M0 4H8" stroke="#000" strokeWidth="2" /></svg>
        </button>
      </footer>
    </section>
  );
}

const trayBtn = "flex h-[21px] w-5 items-center justify-center border-b-2 border-r-2 border-[#6d5858] bg-[#efe4e0]";

function StatusBar() {
  return (
    <footer className="absolute inset-x-0 bottom-0 flex h-6 items-center border-l-2 border-t-2 border-[#6464ae] bg-[#dedcd6]/75 pl-3.5 font-['Liberation_Serif',serif] text-[15px] text-black">
      <p className="flex-1">Calculating world bounds and regenerating grid.</p>
      <div className="mr-3 h-[19px] w-[67px] border-2 border-[#6d5858] bg-white text-center text-[13px] leading-[15px]">0%</div>
      <span className="w-[180px]">XYZ (-3.4 -28.4 7.7)</span>
      <span className="w-[87px]">FPS: 15.8</span>
      <div className="mr-2 flex gap-[10px]">
        <button type="button" aria-label="Network" className={trayBtn}><Icon16><path d="M3 4L12 2V9L3 11Z" fill="#56b4f0" stroke="#2a5a90" /><path d="M5 12L13 10L14 13L6 15Z" fill="#9ab" stroke="#567" strokeWidth=".7" /></Icon16></button>
        <button type="button" aria-label="Mode" className={trayBtn}><span className={`text-sm font-bold leading-none text-[#0a0a80] ${DOC}`}>M</span></button>
        <button type="button" aria-label="Mail" className={trayBtn}><span className={`text-sm leading-none text-[#26267e] ${DOC}`}>@</span></button>
        <button type="button" aria-label="Connect" className={trayBtn}><Icon16><path d="M1 6L9 5V12L1 13Z" fill="#3fa2e6" stroke="#246" strokeWidth=".7" /><path d="M8 8L14 2" stroke="#e0a020" strokeWidth="3.500" /></Icon16></button>
      </div>
    </footer>
  );
}

export default function App() {
  return (
    <div className={`flex h-screen flex-col overflow-hidden bg-white ${UI}`}>
      <header className="flex h-6 shrink-0 items-center pl-0.5 text-[11px] text-[#8c8c8c]">
        <Logo />
        <h1 className="ml-1 flex-1">holoBIM 2021 [Masonry | Design | Detailing] - 01_bk</h1>
        <div className="flex h-full items-center gap-9 pr-5 pb-1">
          <button type="button" aria-label="Minimize window"><span className="block h-px w-[10px] bg-[#8c8c8c]" /></button>
          <button type="button" aria-label="Restore window"><svg width="10" height="10" viewBox="0 0 10 10" fill="none" stroke="#8c8c8c"><path d="M.5 2.500H7.500V9.500H.500ZM2.500 2.500V.5H9.500V7.500H7.500" /></svg></button>
          <button type="button" aria-label="Close window"><svg width="10" height="10" viewBox="0 0 10 10"><path d="M0 0L10 10M10 0L0 10" stroke="#8c8c8c" /></svg></button>
        </div>
      </header>
      <nav className="flex h-5 shrink-0 items-center gap-[15px] border-b border-[#9d9d9d] pb-0.5 pl-1.5 text-[11px] text-[#5f5f5f]" aria-label="Main menu">
        {["Μελέτη", "Παράμετροι", "Επεξεργασία", "Εργαλεία", "Φάσεις", "Απεικόνιση", "Βοήθεια", "My account"].map((m) => (
          <button key={m} type="button">{m}</button>
        ))}
      </nav>
      <div className="flex h-[47px] shrink-0 border-b border-[#9d9d9d]">
        <div className="flex items-center border-r border-[#8d8d8d] bg-[#f0f0f0] px-[10px]" role="toolbar" aria-label="Project">
          {mainIcons.map((t) => (
            <React.Fragment key={t.label}>
              <button type="button" aria-label={t.label} className={tile}><svg width="30" height="30" viewBox="0 0 30 30" fill="none">{t.icon}</svg></button>
              {t.sep ? <span className="mx-2 h-9 w-px bg-[#9a9a9a]" /> : t.label === "Help" ? null : <span className="w-[9px]" />}
            </React.Fragment>
          ))}
        </div>
      </div>
      <div className="flex min-h-0 flex-1 pt-0.5">
        <div className="w-[46px] shrink-0 border-r border-[#a5a5a5]">
          <div className="flex flex-col border-b border-[#a5a5a5] bg-[#f0f0f0] pb-[3px] pl-[5px] pt-[7px]" role="toolbar" aria-label="Model">
            {sideIcons.map((t) => (
              <React.Fragment key={t.label}>
                <button type="button" aria-label={t.label} className="mb-[7px] flex h-8 w-8 items-start justify-end border-b border-l border-b-black border-l-[#c9bfb5]">
                  <span className={tile}><svg width="30" height="30" viewBox="0 0 30 30">{t.icon}</svg></span>
                </button>
                {t.sep && <span className="mb-[7px] h-px w-[34px] bg-[#a5a5a5]" />}
              </React.Fragment>
            ))}
          </div>
        </div>
        <div className="relative min-w-0 flex-1 overflow-hidden border-l border-r-2 border-t-2 border-black bg-white">
          <Scene />
          <StatusBar />
          <Dialog />
        </div>
      </div>
    </div>
  );
}
